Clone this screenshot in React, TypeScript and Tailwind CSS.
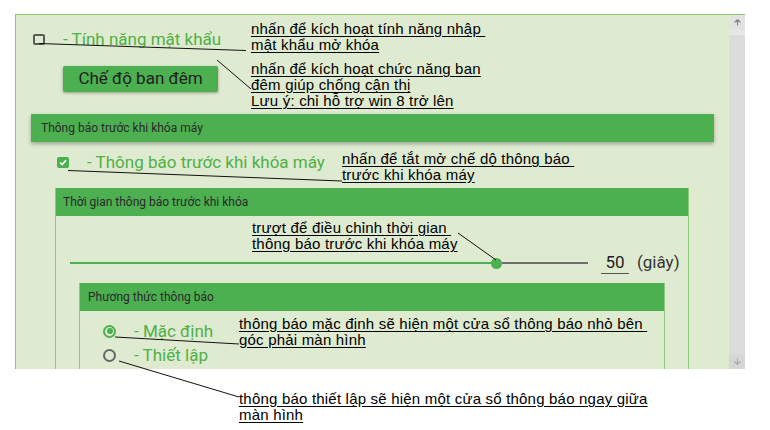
import React from 'react';

const ui = { fontFamily: 'Roboto, "Noto Sans", sans-serif' };
const note = { fontFamily: '"Liberation Sans", Arial, sans-serif' };

function Box({ checked }: { checked?: boolean }) {
  if (checked) {
    return (
      <span className="flex h-[11px] w-[12px] shrink-0 items-center justify-center rounded-[2px] bg-[#4caf50]">
        <svg width="8" height="7" viewBox="0 0 8 7">
          <path d="M1 3.5 L3.2 5.5 L7 1.3" fill="none" stroke="#fff" strokeWidth="1.6" />
        </svg>
      </span>
    );
  }
  return <span className="block h-[11px] w-[12px] shrink-0 rounded-[2px] border-2 border-[#5a5a5a]" />;
}

function Radio({ checked }: { checked?: boolean }) {
  return checked ? (
    <span className="flex h-[13px] w-[13px] shrink-0 items-center justify-center rounded-full border-2 border-[#4caf50]">
      <span className="h-[6px] w-[6px] rounded-full bg-[#4caf50]" />
    </span>
  ) : (
    <span className="block h-[13px] w-[13px] shrink-0 rounded-full border-2 border-[#666]" />
  );
}

function Note({ x, y, lines }: { x: number; y: number; lines: string[] }) {
  return (
    <div className="absolute text-[15px] leading-[16px] tracking-[0.2px] text-black" style={{ ...note, left: x, top: y }}>
      {lines.map((l, i) => (
        <div key={i} className="whitespace-pre underline underline-offset-2">
          {l}
        </div>
      ))}
    </div>
  );
}

export default function App() {
  return (
    <div className="relative h-[430px] w-[770px] overflow-hidden bg-white" style={ui}>
      <div className="ml-[15px] mt-[14px] flex h-[355px] w-[730px] border-l border-t border-[#8cc56a] bg-[#dfebd0]">
        <div className="flex-1 overflow-hidden">
          <div className="box-content flex h-[16px] items-center pl-[17px] pt-[16px]">
            <Box />
            <span className="ml-[18px] whitespace-nowrap text-[17px] leading-[16px] text-[#4fb047]">- Tính năng mật khẩu</span>
          </div>

          <div className="ml-[47px] mt-[19px] flex h-[26px] w-[155px] items-center justify-center rounded-[2px] bg-[#4caf50] text-[17px] text-[#1e1e1e] shadow-[0_1px_3px_rgba(0,0,0,0.35)]">
            Chế độ ban đêm
          </div>

          <div className="mx-[15px] mt-[22px] flex h-[28px] items-center bg-[#4caf50] pl-[10px] text-[12px] text-[#2a2a2a] shadow-[0_2px_4px_rgba(0,0,0,0.3)]">
            Thông báo trước khi khóa máy
          </div>

          <div className="mt-[12px] flex h-[16px] items-center pl-[41px]">
            <Box checked />
            <span className="ml-[18px] whitespace-nowrap text-[17px] leading-[16px] text-[#4fb047]">- Thông báo trước khi khóa máy</span>
          </div>

          <div className="ml-[39px] mr-[40px] mt-[18px] h-[200px] border-x border-[#8cc77a]">
            <div className="flex h-[28px] items-center bg-[#4caf50] pl-[7px] text-[12px] text-[#2a2a2a]">
              Thời gian thông báo trước khi khóa
            </div>
            <div className="mt-[35px] flex h-[24px] items-center pl-[14px]">
              <div className="flex w-[518px] items-center">
                <div className="h-[2px] w-[421px] bg-[#4caf50]" />
                <div className="h-[11px] w-[11px] shrink-0 rounded-full bg-[#4caf50]" />
                <div className="h-[2px] flex-1 bg-[#6f6f6f]" />
              </div>
              <div className="ml-[13px] w-[28px] border-b border-[#555] pb-[2px] text-center text-[17px] leading-[18px] text-[#222]">
                50
              </div>
              <span className="ml-[8px] text-[17px] text-[#333]">(giây)</span>
            </div>

            <div className="mx-[23px] mt-[8px] h-[120px] border-x border-[#8cc77a]">
              <div className="flex h-[28px] items-center bg-[#4caf50] pl-[8px] text-[12px] text-[#2a2a2a]">
                Phương thức thông báo
              </div>
              <div className="mt-[12px] flex h-[16px] items-center pl-[23px]">
                <Radio checked />
                <span className="ml-[18px] text-[17px] leading-[16px] text-[#4fb047]">- Mặc định</span>
              </div>
              <div className="mt-[8px] flex h-[16px] items-center pl-[23px]">
                <Radio />
                <span className="ml-[18px] text-[17px] leading-[16px] text-[#4fb047]">- Thiết lập</span>
              </div>
            </div>
          </div>
        </div>

        <div className="flex w-[16px] flex-col bg-[#dcdcdc]">
          <div className="flex h-[15px] items-center justify-center bg-[#e2e2e2]">
            <svg width="7" height="7" viewBox="0 0 7 7">
              <path d="M3.5 0.5 L6.5 3.5 M3.5 0.5 L0.5 3.5 M3.5 0.5 V6.5" stroke="#888" strokeWidth="1.2" fill="none" />
            </svg>
          </div>
          <div className="h-[5px] bg-[#e8e8e8]" />
          <div className="flex-1" />
          <div className="flex h-[15px] items-center justify-center bg-[#d6d6d6]">
            <svg width="7" height="7" viewBox="0 0 7 7">
              <path d="M3.5 6.5 L6.5 3.5 M3.5 6.5 L0.5 3.5 M3.5 6.5 V0.5" stroke="#aaa" strokeWidth="1.2" fill="none" />
            </svg>
          </div>
        </div>
      </div>

      <Note x={251} y={21} lines={['nhấn để kích hoạt tính năng nhập ', 'mật khẩu mở khóa']} />
      <Note x={251} y={61} lines={['nhấn để kích hoạt chức năng ban', 'đêm giúp chống cận thị', 'Lưu ý: chỉ hỗ trợ win 8 trở lên']} />
      <Note x={342} y={151} lines={['nhấn để tắt mở chế dộ thông báo ', 'trước khi khóa máy']} />
      <Note x={252} y={220} lines={['trượt để điều chỉnh thời gian ', 'thông báo trước khi khóa máy']} />
      <Note x={239} y={316} lines={['thông báo mặc định sẽ hiện một cửa sổ thông báo nhỏ bên ', 'góc phải màn hình']} />
      <Note x={239} y={391} lines={['thông báo thiết lập sẽ hiện một cửa sổ thông báo ngay giữa', 'màn hình']} />

      <svg className="pointer-events-none absolute left-0 top-0" width="770" height="430">
        <g stroke="#111" strokeWidth="1" fill="none">
          <path d="M39 43.5 L246 50.5" />
          <path d="M217 60 L251 89" />
          <path d="M68 170.5 L342 181" />
          <path d="M458 233 L496 260" />
          <path d="M115 337 L239 344" />
          <path d="M119 361 L239 397" />
        </g>
      </svg>
    </div>
  );
}
